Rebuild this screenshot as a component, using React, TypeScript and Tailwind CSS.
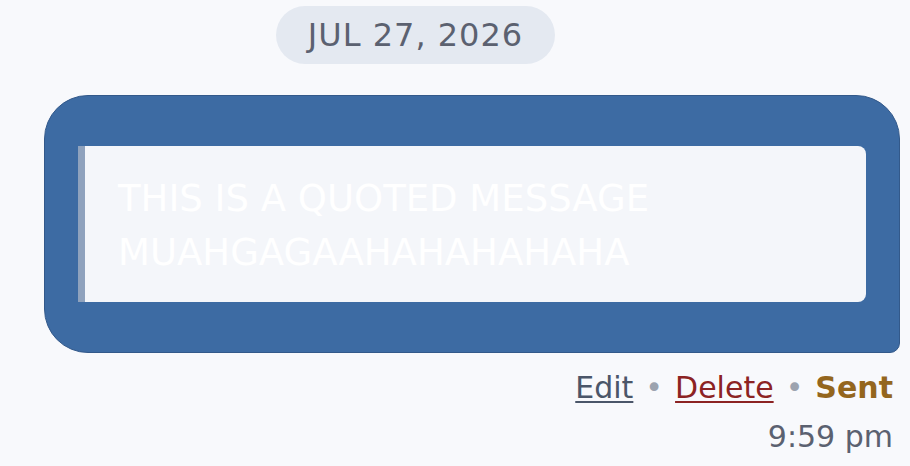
export default function App() {
  return (
    <div
      className="min-h-screen w-full bg-[#f8f9fc] pt-[6px]"
      style={{ fontFamily: '"DejaVu Sans", Verdana, sans-serif' }}
    >
      <div className="ml-[276px] flex h-[58px] w-[279px] items-center justify-center rounded-full bg-[#e4e9f1] text-[32px] tracking-[1px] text-[#5b6170]">
        JUL 27, 2026
      </div>

      <div className="ml-[44px] mt-[31px] w-[856px] rounded-[44px] rounded-br-[10px] border border-[#33598a] bg-[#3d6ba3] px-[33px] py-[50px]">
        <div className="flex h-[156px] rounded-r-[8px] border-l-[7px] border-[#8fa2bd] bg-[#f4f6fa] pl-[33px] pt-[26px]">
          <p className="text-[37px] leading-[54px] text-white">
            THIS IS A QUOTED MESSAGE
            <br />
            MUAHGAGAAHAHAHAHAHA
          </p>
        </div>
      </div>

      <div className="mr-[17px] mt-[15px] flex flex-col items-end text-[30px]">
        <div className="flex items-center gap-[12px] leading-[40px]">
          <span className="text-[#4b5669] underline decoration-2 underline-offset-[3px]">Edit</span>
          <span className="text-[#9ca3af]">•</span>
          <span className="text-[#8c2323] underline decoration-2 underline-offset-[3px]">Delete</span>
          <span className="text-[#9ca3af]">•</span>
          <span className="font-bold text-[#94661e]">Sent</span>
        </div>
        <div className="mt-[9px] leading-[40px] text-[#5b6170]">9:59 pm</div>
      </div>
    </div>
  );
}
